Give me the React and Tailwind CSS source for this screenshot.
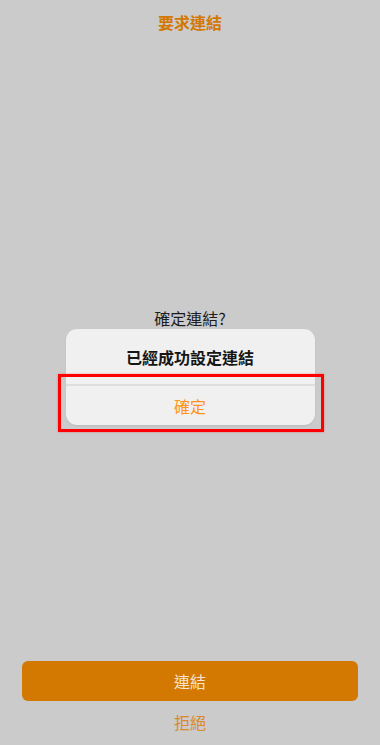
export default function App() {
  return (
    <div
      className="w-[380px] h-[745px] bg-[#cbcbcb] flex flex-col items-center overflow-hidden"
      style={{ fontFamily: '"Noto Sans CJK TC", "Noto Sans", sans-serif' }}
    >
      <div className="mt-[11px] h-[22px] leading-[22px] text-[16px] font-bold text-[#d47700]">要求連結</div>

      <div className="mt-[274px] h-[22px] leading-[22px] text-[16px] text-[#1e1e1e]">確定連結?</div>

      <div className="relative mt-[0px] w-[249px] rounded-[11px] bg-[#f0f0f0] shadow-[0_1px_2px_rgba(0,0,0,0.08)]">
        <div className="h-[55px] flex items-center justify-center text-[16px] font-bold text-[#161616]">已經成功設定連結</div>
        <div className="h-[2px] bg-[#dedede]" />
        <div className="h-[39px] flex items-center justify-center text-[16px] text-[#ff9419]">確定</div>
        <div className="absolute left-[-8px] top-[45px] right-[-9px] bottom-[-7px] border-[3px] border-[#ff0000] shadow-[0_0_2px_rgba(255,0,0,0.4)]" />
      </div>

      <div className="mt-[236px] w-[336px] h-[40px] rounded-[6px] bg-[#d37800] flex items-center justify-center text-[16px] text-[#f5e4cf]">
        連結
      </div>
      <div className="mt-[10px] h-[22px] leading-[22px] text-[16px] text-[#d98a2a]">拒絕</div>
    </div>
  );
}
